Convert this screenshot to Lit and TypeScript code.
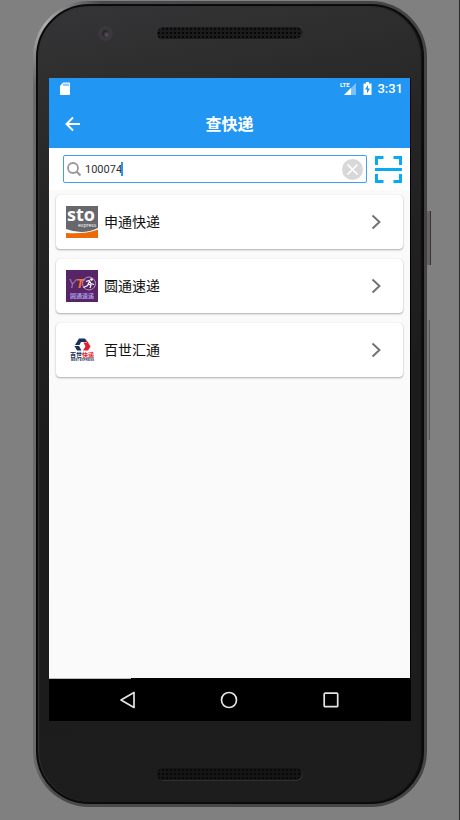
import { LitElement, html, svg, css } from "lit";
import { customElement, property, state } from "lit/decorators.js";

const stoLogo = svg`
  <rect width="32" height="32" fill="#67686d"/>
  <path d="M0 23Q17 29.500 32 22V32H0Z" fill="#fff"/>
  <path d="M0 27Q18 28.500 32 23.500V32H0Z" fill="#ea6a0c"/>
  <text class="sto" x="1" y="15">sto</text>
  <text class="express" x="12" y="21">express</text>`;

const ytoLogo = svg`
  <rect width="32" height="32" fill="#582468"/>
  <text class="yt" x="2" y="18" fill="#a07aa8">Y</text>
  <text class="yt heavy" x="10" y="18" fill="#f47a2a">T</text>
  <circle cx="23" cy="13.500" r="6.500" fill="none" stroke="#b796bb" stroke-width="1"/>
  <circle cx="25.500" cy="9.500" r="1.300" fill="#fff"/>
  <path d="M20 11.500l3-1 2 3 3 1M23.500 11.500l-2 4-4 2M21.500 14l3.500 1-1 3" fill="none" stroke="#fff" stroke-width="1.200"/>
  <text class="tiny" x="4" y="28" fill="#a79ae0">圆通速递</text>`;

const bestLogo = svg`
  <path d="M13 4.500H19L21 8H15L13.500 11H9Z" fill="#17335c"/>
  <path d="M8.500 12H13L15.500 16.500H11Z" fill="#17335c"/>
  <path d="M20 5L24.500 12.500L22 16.500H17L19.500 12.500L17.500 8.500H21Z" fill="#e01f2d"/>
  <text class="tiny" x="4" y="23" fill="#17335c">百世<tspan fill="#e01f2d">快递</tspan></text>
  <text class="best" x="5" y="27" fill="#17335c">BEST EXPRESS</text>`;

const couriers = [
  { name: "申通快递", logo: stoLogo },
  { name: "圆通速递", logo: ytoLogo },
  { name: "百世汇通", logo: bestLogo },
];

@customElement("courier-card")
export class CourierCard extends LitElement {
  @property() name = "";
  @property({ attribute: false }) logo: unknown;

  static styles = css`
    :host { display: block; }
    .card {
      display: flex; align-items: center; width: 100%; height: 54px; box-sizing: border-box;
      padding: 0 20px 0 10px; border: 0; border-radius: 4px; background: #fff; color: #111;
      box-shadow: 0 1px 2px rgba(0, 0, 0, 0.3), 0 0 1px rgba(0, 0, 0, 0.15);
      font: 14px/20px "Noto Sans CJK SC", sans-serif; text-align: left;
    }
    .logo { width: 32px; height: 32px; flex: none; overflow: visible; }
    .name { flex: 1; margin-left: 6px; padding-bottom: 2px; }
    .chevron { width: 14px; height: 16px; }
    .sto { font: 700 18px "Open Sans", sans-serif; fill: #fff; }
    .express { font: 5px "Open Sans", sans-serif; fill: #fff; }
    .yt { font: italic 13px "Liberation Sans", sans-serif; }
    .heavy { font-weight: 700; }
    .tiny { font: 700 6px "Noto Sans CJK SC", sans-serif; }
    .best { font: 700 3px "Liberation Sans", sans-serif; }
  `;

  render() {
    return html`<button class="card" type="button">
      <svg class="logo" viewBox="0 0 32 32" aria-hidden="true">${this.logo}</svg>
      <span class="name">${this.name}</span>
      <svg class="chevron" viewBox="0 0 14 16" aria-hidden="true">
        <path d="M3.500 1.500L10.500 8L3.500 14.500" fill="none" stroke="#707070" stroke-width="1.900"/>
      </svg>
    </button>`;
  }
}

@customElement("app-root")
export class AppRoot extends LitElement {
  @state() private query = "100074";

  static styles = css`
    :host {
      display: block; box-sizing: border-box; min-height: 100vh;
      padding: 1px 32px 13px 33px; background: #808080; border-right: 1px solid #2b2b2b;
      font-family: Roboto, "Noto Sans CJK SC", sans-serif;
    }
    button { font: inherit; border: 0; padding: 0; background: none; color: inherit; }
    svg { display: block; }
    .phone {
      position: relative; display: flex; box-sizing: border-box; min-height: calc(100vh - 14px);
      padding: 3px; border-radius: 56px;
      background:
        radial-gradient(circle at 12px 24px, #b0b0b0 0, rgba(176, 176, 176, 0) 60px),
        linear-gradient(90deg, #6d6b6b 0, #4b4949 5%, #454343 100%);
    }
    .bezel {
      flex: 1; display: flex; flex-direction: column; padding: 0 11px;
      border: 2px solid #0b0b0b; border-radius: 53px;
      background: linear-gradient(168deg, #353537 0, #252525 22%, #1c1c1c 50%, #1d1d1e 100%);
      box-shadow: inset 1px 0 1px #333, inset -1px 0 1px #111;
    }
    .key {
      position: absolute; left: 100%; width: 4px; box-sizing: border-box;
      background: #666262; border-right: 1px solid #333;
    }
    .power { top: 210px; height: 54px; }
    .volume { top: 319px; height: 120px; width: 3px; background: #777; border-right-color: #555; }
    .top { display: grid; grid-template-columns: 1fr 146px 1fr; height: 72px; }
    .camera {
      width: 7px; height: 7px; border: 4px solid #39393b; border-radius: 50%;
      background: radial-gradient(circle at 70% 70%, #65505d, #242430 60%);
      justify-self: center; margin: 20px 0 0 5px;
    }
    .speaker {
      grid-column: 2; height: 13px; margin-top: 21px; border-radius: 7px; background-color: #1b1b1b;
      background-image: radial-gradient(circle, #080808 1px, transparent 1px);
      background-size: 4px 4px; box-shadow: inset -1px -1px 0 #303030;
    }
    .bottom { display: grid; grid-template-columns: 1fr 146px 1fr; height: 81px; }
    .bottom .speaker { margin-top: 47px; background-color: #151515; }
    .screen {
      flex: 1; display: flex; flex-direction: column; background: #fafafa; border-right: 1px solid #000;
    }
    .status {
      display: flex; align-items: center; height: 22px; padding: 0 7px 0 10px;
      background: #2196f3; color: #fff; font-size: 13px; line-height: 16px; font-weight: 500;
    }
    .status .sd { margin-right: auto; }
    .signal { margin-right: 6px; }
    .battery { margin-right: 5px; }
    .lte { font: 700 6px Roboto, sans-serif; fill: #fff; }
    .bar {
      display: grid; grid-template-columns: 48px 1fr 48px; align-items: center; height: 48px;
      background: #2196f3; color: #fff;
    }
    .bar h1 { margin: 0; padding-bottom: 2px; font: 700 16px/24px "Noto Sans CJK SC", sans-serif; text-align: center; }
    .back { display: grid; place-items: center; height: 48px; }
    .search { display: flex; align-items: center; gap: 8px; height: 42px; padding: 0 8px 0 14px; background: #fff; }
    .field {
      flex: 1; display: flex; align-items: center; height: 28px; box-sizing: border-box;
      padding: 0 3px; border: 1px solid #429fe9; border-radius: 2px;
    }
    .field input {
      field-sizing: content; margin: 0 0 0 4px; padding: 2px 0 0; border: 0; outline: 0; background: none;
      font: 11px/16px Roboto, sans-serif; color: #333; caret-color: transparent;
    }
    .caret { width: 2px; height: 14px; margin-left: -1px; background: #2196f3; }
    .clear { margin-left: auto; }
    .list { flex: 1; padding: 5px 7px; display: flex; flex-direction: column; gap: 10px; }
    .nav {
      position: relative; display: grid; grid-template-columns: 1fr 1fr 1fr; place-items: center;
      height: 43px; margin-right: -1px; padding: 0 29px 0 28px; background: #000;
    }
    .progress { position: absolute; top: 0; left: 0; width: 82px; height: 1px; background: #bbb; }
  `;

  render() {
    return html`
      <div class="phone">
        <span class="key power"></span>
        <span class="key volume"></span>
        <div class="bezel">
          <div class="top"><span class="camera"></span><span class="speaker"></span></div>
          <main class="screen">
            <div class="status">
              <svg class="sd" width="12" height="14" viewBox="0 0 12 14" aria-hidden="true">
                <path d="M4 0.500H10Q11 0.500 11 1.500V12Q11 13 10 13H2Q1 13 1 12V4Z" fill="#fff"/>
                <path d="M5 1.500V4M7 1.500V4M9 1.500V4" stroke="#2196f3" stroke-width="1"/>
              </svg>
              <svg class="signal" width="17" height="14" viewBox="0 0 17 14" aria-hidden="true">
                <path d="M16 1V13H4Z" fill="#7cc0f8"/><path d="M11 6V13H4Z" fill="#fff"/>
                <text class="lte" x="0" y="5">LTE</text>
              </svg>
              <svg class="battery" width="9" height="14" viewBox="0 0 9 14" aria-hidden="true">
                <path d="M3 0H6V1.500H8.500V13H0.500V1.500H3Z" fill="#fff"/>
                <path d="M5 3L2 7.500H4V11.500L7 6.500H5Z" fill="#2196f3"/>
              </svg>
              <span>3:31</span>
            </div>
            <header class="bar">
              <button class="back" type="button" aria-label="返回">
                <svg width="16" height="16" viewBox="0 0 16 16"><path d="M15 8H2M8 1.500L1.500 8L8 14.500" fill="none" stroke="#fff" stroke-width="1.900"/></svg>
              </button>
              <h1>查快递</h1>
            </header>
            <div class="search">
              <label class="field">
                <svg width="14" height="14" viewBox="0 0 14 14" aria-hidden="true">
                  <circle cx="6" cy="6" r="5" fill="none" stroke="#999" stroke-width="1.800"/>
                  <path d="M9.500 9.500L13.500 13.500" stroke="#999" stroke-width="2.200"/>
                </svg>
                <input type="text" aria-label="快递单号" .value=${this.query}
                  @input=${(e: Event) => (this.query = (e.target as HTMLInputElement).value)} />
                <span class="caret"></span>
                <button class="clear" type="button" aria-label="清除" @click=${() => (this.query = "")}>
                  <svg width="21" height="21" viewBox="0 0 21 21">
                    <circle cx="10.500" cy="10.500" r="10.500" fill="#d8d8d8"/>
                    <path d="M5.500 5.500L15.500 15.500M15.500 5.500L5.500 15.500" stroke="#fff" stroke-width="1.700"/>
                  </svg>
                </button>
              </label>
              <button type="button" aria-label="扫一扫">
                <svg width="27" height="27" viewBox="0 0 27 27" fill="none" stroke="#08aaf2" stroke-width="3">
                  <path d="M1.500 9V1.500H8.500M18.500 1.500H25.500V9M25.500 18V25.500H18.500M8.500 25.500H1.500V18M0 13.500H27"/>
                </svg>
              </button>
            </div>
            <div class="list">
              ${couriers.map((c) => html`<courier-card .name=${c.name} .logo=${c.logo}></courier-card>`)}
            </div>
            <nav class="nav">
              <span class="progress"></span>
              <button type="button" aria-label="后退">
                <svg width="18" height="18" viewBox="0 0 18 18"><path d="M15 1.500V16.500L2 9Z" fill="none" stroke="#e4e4e0" stroke-width="1.700" stroke-linejoin="round"/></svg>
              </button>
              <button type="button" aria-label="主页">
                <svg width="18" height="18" viewBox="0 0 18 18"><circle cx="9" cy="9" r="7.500" fill="none" stroke="#e4e4e0" stroke-width="1.700"/></svg>
              </button>
              <button type="button" aria-label="最近">
                <svg width="18" height="18" viewBox="0 0 18 18"><rect x="2.200" y="2.200" width="13.500" height="13.500" rx="1" fill="none" stroke="#e4e4e0" stroke-width="1.700"/></svg>
              </button>
            </nav>
          </main>
          <div class="bottom"><span class="speaker"></span></div>
        </div>
      </div>`;
  }
}
